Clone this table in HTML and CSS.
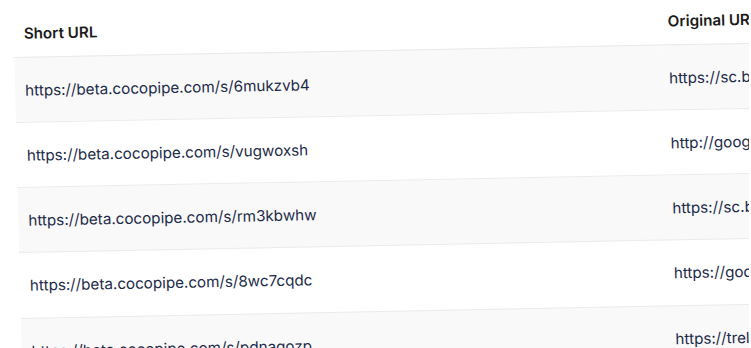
FILE: index.html
```html
<!DOCTYPE html>
<html lang="en">
<head>
<meta charset="utf-8">
<title>Short URLs</title>
<link rel="stylesheet" href="styles.css">
</head>
<body>
<div class="viewport">
  <div class="stage">
    <table class="links">
      <thead>
        <tr><th class="c-short">Short URL</th><th class="c-orig">Original URL</th></tr>
      </thead>
      <tbody>
        <tr><td>https://beta.cocopipe.com/s/6mukzvb4</td><td>https://sc.bsky.app/profile/example</td></tr>
        <tr><td>https://beta.cocopipe.com/s/vugwoxsh</td><td>http://google.com/search?q=cocopipe</td></tr>
        <tr><td>https://beta.cocopipe.com/s/rm3kbwhw</td><td>https://sc.bsky.app/feed/example</td></tr>
        <tr><td>https://beta.cocopipe.com/s/8wc7cqdc</td><td>https://google.com/maps</td></tr>
        <tr><td>https://beta.cocopipe.com/s/pdnagozp</td><td>https://trello.com/b/example</td></tr>
      </tbody>
    </table>
  </div>
</div>
</body>
</html>
```
FILE: styles.css
```css
html, body {
  margin: 0;
  padding: 0;
  background: #ffffff;
  overflow: hidden;
  width: 751px;
  height: 348px;
}
.viewport {
  width: 749px;
  height: 348px;
  overflow: hidden;
}
.stage {
  padding-left: 13px;
  transform-origin: 13px 0;
  transform: rotate(-1.1deg) skewX(0.3deg);
}
.links {
  border-collapse: collapse;
  width: 1000px;
  font-family: Inter, "Noto Sans", sans-serif;
  font-size: 15.2px;
  line-height: 20px;
  white-space: nowrap;
}
.links th {
  text-align: left;
  font-weight: 600;
  color: #1a1a1a;
  height: 57px;
  padding: 12px 10px 0;
  vertical-align: middle;
  border-bottom: 1px solid #e9e9e9;
  box-sizing: border-box;
}
.links .c-short {
  width: 644px;
}
.links td {
  color: #1d2b4a;
  height: 65.25px;
  padding: 2px 10px 0;
  box-sizing: border-box;
  border-bottom: 1px solid #ebebeb;
  vertical-align: middle;
}
.links tbody tr:nth-child(odd) td {
  background: #f9f9f9;
}
```
